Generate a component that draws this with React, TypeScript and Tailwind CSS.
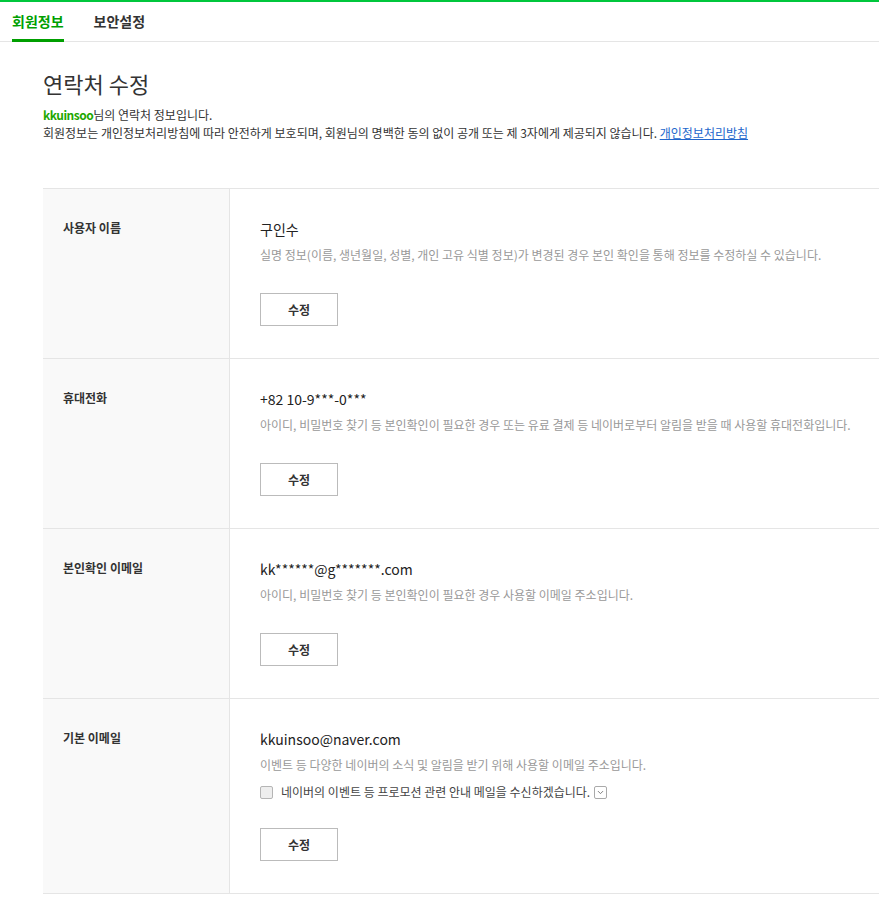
import { ChevronDown } from "lucide-react";

const font = { fontFamily: '"Noto Sans CJK KR", "Noto Sans", sans-serif' };

type Row = {
  label: string;
  value: string;
  desc: string;
  agree?: boolean;
};

const rows: Row[] = [
  {
    label: "사용자 이름",
    value: "구인수",
    desc: "실명 정보(이름, 생년월일, 성별, 개인 고유 식별 정보)가 변경된 경우 본인 확인을 통해 정보를 수정하실 수 있습니다.",
  },
  {
    label: "휴대전화",
    value: "+82 10-9***-0***",
    desc: "아이디, 비밀번호 찾기 등 본인확인이 필요한 경우 또는 유료 결제 등 네이버로부터 알림을 받을 때 사용할 휴대전화입니다.",
  },
  {
    label: "본인확인 이메일",
    value: "kk******@g*******.com",
    desc: "아이디, 비밀번호 찾기 등 본인확인이 필요한 경우 사용할 이메일 주소입니다.",
  },
  {
    label: "기본 이메일",
    value: "kkuinsoo@naver.com",
    desc: "이벤트 등 다양한 네이버의 소식 및 알림을 받기 위해 사용할 이메일 주소입니다.",
    agree: true,
  },
];

function InfoRow({ row }: { row: Row }) {
  return (
    <div className="flex border-b border-[#e5e5e5]">
      <div className="w-[187px] shrink-0 bg-[#f9f9f9] border-r border-[#e5e5e5] pl-[20px] pt-[30px]">
        <div className="text-[12px] leading-[18px] font-bold text-[#333]">{row.label}</div>
      </div>
      <div className="flex-1 pl-[30px] pt-[30px] pb-[32px]">
        <div className="text-[14px] leading-[20px] text-[#222]">{row.value}</div>
        <div className="mt-[7px] text-[12px] leading-[18px] text-[#999] whitespace-nowrap">{row.desc}</div>
        {row.agree && (
          <label className="mt-[9px] flex items-center text-[12px] leading-[18px] text-[#444] whitespace-nowrap">
            <span className="w-[13px] h-[13px] rounded-[2px] border border-[#b5b5b5] bg-[#eeeeee] mr-[8px]" />
            네이버의 이벤트 등 프로모션 관련 안내 메일을 수신하겠습니다.
            <span className="ml-[4px] w-[13px] h-[13px] border border-[#aaa] rounded-[2px] flex items-center justify-center bg-white">
              <ChevronDown className="w-[9px] h-[9px] text-[#777]" strokeWidth={2.5} />
            </span>
          </label>
        )}
        <button
          className={`${row.agree ? "mt-[27px]" : "mt-[29px]"} block w-[78px] h-[33px] border border-[#bbb] bg-white text-[12px] font-bold text-[#333]`}
        >
          수정
        </button>
      </div>
    </div>
  );
}

export default function App() {
  return (
    <div className="min-h-screen bg-white overflow-hidden" style={font}>
      <div className="h-[2px] bg-[#00c73c]" />
      <nav className="h-[40px] border-b border-[#e5e5e5] flex pl-[12px] gap-[30px]">
        <div className="relative flex items-center">
          <span className="text-[14px] font-bold text-[#009f00]">회원정보</span>
          <span className="absolute left-0 right-0 bottom-[-1px] h-[3px] bg-[#009f00]" />
        </div>
        <div className="flex items-center">
          <span className="text-[14px] font-bold text-[#333]">보안설정</span>
        </div>
      </nav>
      <main className="pl-[43px] pt-[26px]">
        <h2 className="text-[22px] leading-[30px] text-[#333]">연락처 수정</h2>
        <p className="mt-[8px] text-[12px] leading-[18px] text-[#333]">
          <span className="font-bold text-[#1ea700] tracking-[-0.5px]">kkuinsoo</span>님의 연락처 정보입니다.
        </p>
        <p className="text-[12px] leading-[18px] text-[#333] whitespace-nowrap">
          회원정보는 개인정보처리방침에 따라 안전하게 보호되며, 회원님의 명백한 동의 없이 공개 또는 제 3자에게 제공되지 않습니다.{" "}
          <a className="text-[#2266cc] underline">개인정보처리방침</a>
        </p>
        <div className="mt-[46px] border-t border-[#e5e5e5] w-[900px]">
          {rows.map((row) => (
            <InfoRow key={row.label} row={row} />
          ))}
        </div>
      </main>
    </div>
  );
}
